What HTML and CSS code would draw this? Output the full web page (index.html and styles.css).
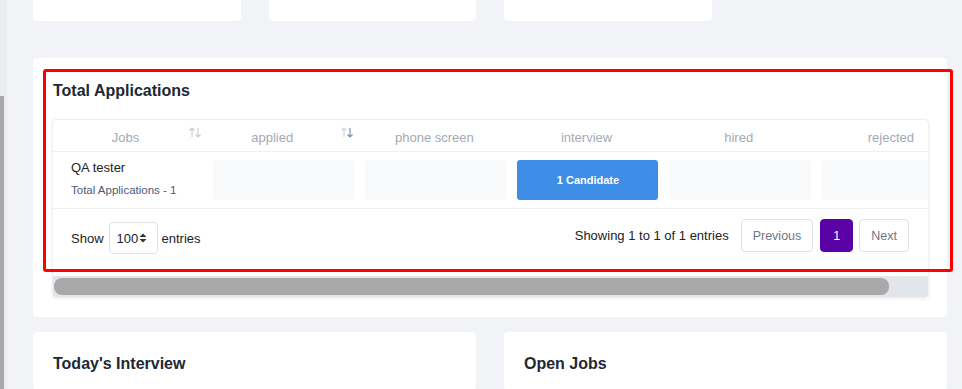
FILE: index.html
```html
<!DOCTYPE html>
<html lang="en">
<head>
<meta charset="utf-8">
<title>Dashboard</title>
<link rel="stylesheet" href="styles.css">
</head>
<body>
<div class="page">
  <div class="side-scroll"><div class="side-thumb"></div></div>
  <main class="content">
    <div class="stats">
      <div class="stat"></div>
      <div class="stat"></div>
      <div class="stat"></div>
    </div>

    <section class="panel">
      <h2 class="panel-title">Total Applications</h2>
      <div class="table-card">
        <div class="table-clip">
          <table class="pipeline">
            <colgroup>
              <col class="col-first">
              <col class="col">
              <col class="col">
              <col class="col">
              <col class="col">
              <col class="col">
            </colgroup>
            <thead>
              <tr>
                <th class="sorting th-jobs">Jobs
                  <svg class="sort-icon" width="12" height="11" viewBox="0 0 12 11"><path d="M3 10V1M0.5 3.5L3 1l2.5 2.5" stroke="#c9ced6" stroke-width="1.2" fill="none"/><path d="M9 1v9M6.5 7.5L9 10l2.5-2.5" stroke="#c9ced6" stroke-width="1.2" fill="none"/></svg>
                </th>
                <th class="sorting">applied
                  <svg class="sort-icon" width="12" height="11" viewBox="0 0 12 11"><path d="M3 10V1M0.5 3.5L3 1l2.5 2.5" stroke="#d3d7dd" stroke-width="1.2" fill="none"/><path d="M9 1v9M6.5 7.5L9 10l2.5-2.5" stroke="#7d8db3" stroke-width="1.2" fill="none"/></svg>
                </th>
                <th>phone screen</th>
                <th>interview</th>
                <th>hired</th>
                <th>rejected</th>
              </tr>
            </thead>
            <tbody>
              <tr>
                <td class="job-cell">
                  <div class="job-name">QA tester</div>
                  <div class="job-sub">Total Applications - 1</div>
                </td>
                <td class="stage"><div class="stage-box"></div></td>
                <td class="stage"><div class="stage-box"></div></td>
                <td class="stage"><div class="stage-box filled">1 Candidate</div></td>
                <td class="stage"><div class="stage-box"></div></td>
                <td class="stage"><div class="stage-box"></div></td>
              </tr>
            </tbody>
          </table>
        </div>
        <div class="table-footer">
          <div class="length">
            <span>Show</span>
            <span class="select">100<svg width="8" height="10" viewBox="0 0 8 10"><path d="M0.5 4L4 0.5 7.5 4z M0.5 6L4 9.5 7.5 6z" fill="#333"/></svg></span>
            <span>entries</span>
          </div>
          <div class="paging">
            <span class="info">Showing 1 to 1 of 1 entries</span>
            <span class="pg-btn">Previous</span>
            <span class="pg-btn active">1</span>
            <span class="pg-btn">Next</span>
          </div>
        </div>
        <div class="hscroll"><div class="hscroll-thumb"></div></div>
      </div>
      <div class="highlight"></div>
    </section>

    <div class="bottom-row">
      <section class="mini-card"><h2 class="panel-title">Today's Interview</h2></section>
      <section class="mini-card"><h2 class="panel-title">Open Jobs</h2></section>
    </div>
  </main>
</div>
</body>
</html>
```

FILE: styles.css
```css
* { box-sizing: border-box; }

html, body {
  margin: 0;
  height: 389px;
  overflow: hidden;
}

body {
  background: #f1f3f6;
  font-family: "Liberation Sans", Arial, sans-serif;
  color: #212529;
}

.page {
  display: flex;
  height: 389px;
}

.side-scroll {
  width: 7px;
  flex: 0 0 7px;
  background: #eaedf0;
  display: flex;
  flex-direction: column;
}

.side-thumb {
  margin-top: 96px;
  width: 4px;
  flex: 1;
  background: #a9a7a8;
}

.content {
  flex: 1;
  min-width: 0;
  padding: 0 15px 0 26px;
}

.stats {
  display: grid;
  grid-template-columns: repeat(4, 1fr);
  gap: 28px;
}

.stat {
  height: 21px;
  background: #fff;
  border-radius: 0 0 4px 4px;
}

.panel {
  position: relative;
  background: #fff;
  border-radius: 4px;
  margin-top: 37px;
  padding: 23px 18px 19px 19px;
}

.panel-title {
  margin: 0 0 18px 1px;
  font-size: 16px;
  line-height: 20px;
  font-weight: 700;
  color: #212833;
}

.table-card {
  border: 1px solid #eceff3;
  border-radius: 4px;
  box-shadow: 0 1px 3px rgba(30, 40, 60, 0.08);
  overflow: hidden;
}

.table-clip {
  overflow: hidden;
}

.pipeline {
  width: 914px;
  table-layout: fixed;
  border-collapse: collapse;
}

.col-first { width: 153px; }
.col { width: 152px; }

.pipeline th {
  position: relative;
  height: 26px;
  line-height: 26px;
  padding: 5px 10px 0;
  font-size: 13px;
  font-weight: 400;
  color: #a3aab5;
  text-align: center;
  white-space: nowrap;
  border-bottom: 1px solid #eef0f3;
}

.pipeline th.sorting { padding-right: 30px; }
.pipeline th.th-jobs { padding-left: 22px; }

.sort-icon {
  position: absolute;
  right: 5px;
  top: 7px;
}

.pipeline td {
  vertical-align: top;
  border-bottom: 1px solid #eef0f3;
}

.job-cell {
  padding: 8px 0 0 18px;
}

.job-name {
  font-size: 13px;
  line-height: 16px;
  color: #222;
}

.job-sub {
  margin-top: 7px;
  font-size: 11.5px;
  line-height: 14px;
  color: #4a5a76;
}

.stage {
  padding: 8px 4px 8px 7px;
}

.stage-box {
  width: 141px;
  height: 40px;
  background: #f8f9fb;
  border-radius: 3px;
}

.stage-box.filled {
  background: #3e8de6;
  color: #fff;
  font-size: 11px;
  font-weight: 700;
  display: flex;
  align-items: center;
  justify-content: center;
}

.table-footer {
  display: flex;
  justify-content: space-between;
  align-items: flex-start;
  padding: 10px 19px 22px 18px;
  font-size: 13px;
  color: #222;
}

.length {
  display: flex;
  align-items: center;
  gap: 5px;
  margin-top: 3px;
}

.select {
  display: flex;
  align-items: center;
  gap: 1px;
  width: 49px;
  height: 32px;
  padding-left: 7px;
  border: 1px solid #dee2e6;
  border-radius: 4px;
  margin-right: -1px;
}

.paging {
  display: flex;
  align-items: center;
  gap: 7px;
}

.info { margin-right: 5px; }

.pg-btn {
  display: flex;
  align-items: center;
  justify-content: center;
  height: 33px;
  padding: 0 11px;
  border: 1px solid #dee2e6;
  border-radius: 4px;
  font-size: 12.5px;
  color: #6f7781;
}

.pg-btn.active {
  width: 33px;
  padding: 0;
  background: #5a02a6;
  border-color: #5a02a6;
  color: #fff;
  margin-right: -1px;
}

.hscroll {
  height: 21px;
  background: #e2e6eb;
  padding: 2px 39px 2px 1px;
}

.hscroll-thumb {
  height: 17px;
  background: #aaa8a9;
  border-radius: 8px;
}

.highlight {
  position: absolute;
  left: 10px;
  top: 11px;
  width: 910px;
  height: 203px;
  border: 3px solid #ff0000;
  border-radius: 3px;
  pointer-events: none;
}

.bottom-row {
  display: grid;
  grid-template-columns: 1fr 1fr;
  gap: 28px;
  margin-top: 15px;
}

.mini-card {
  background: #fff;
  border-radius: 4px;
  padding: 22px 19px;
  height: 58px;
}
```
